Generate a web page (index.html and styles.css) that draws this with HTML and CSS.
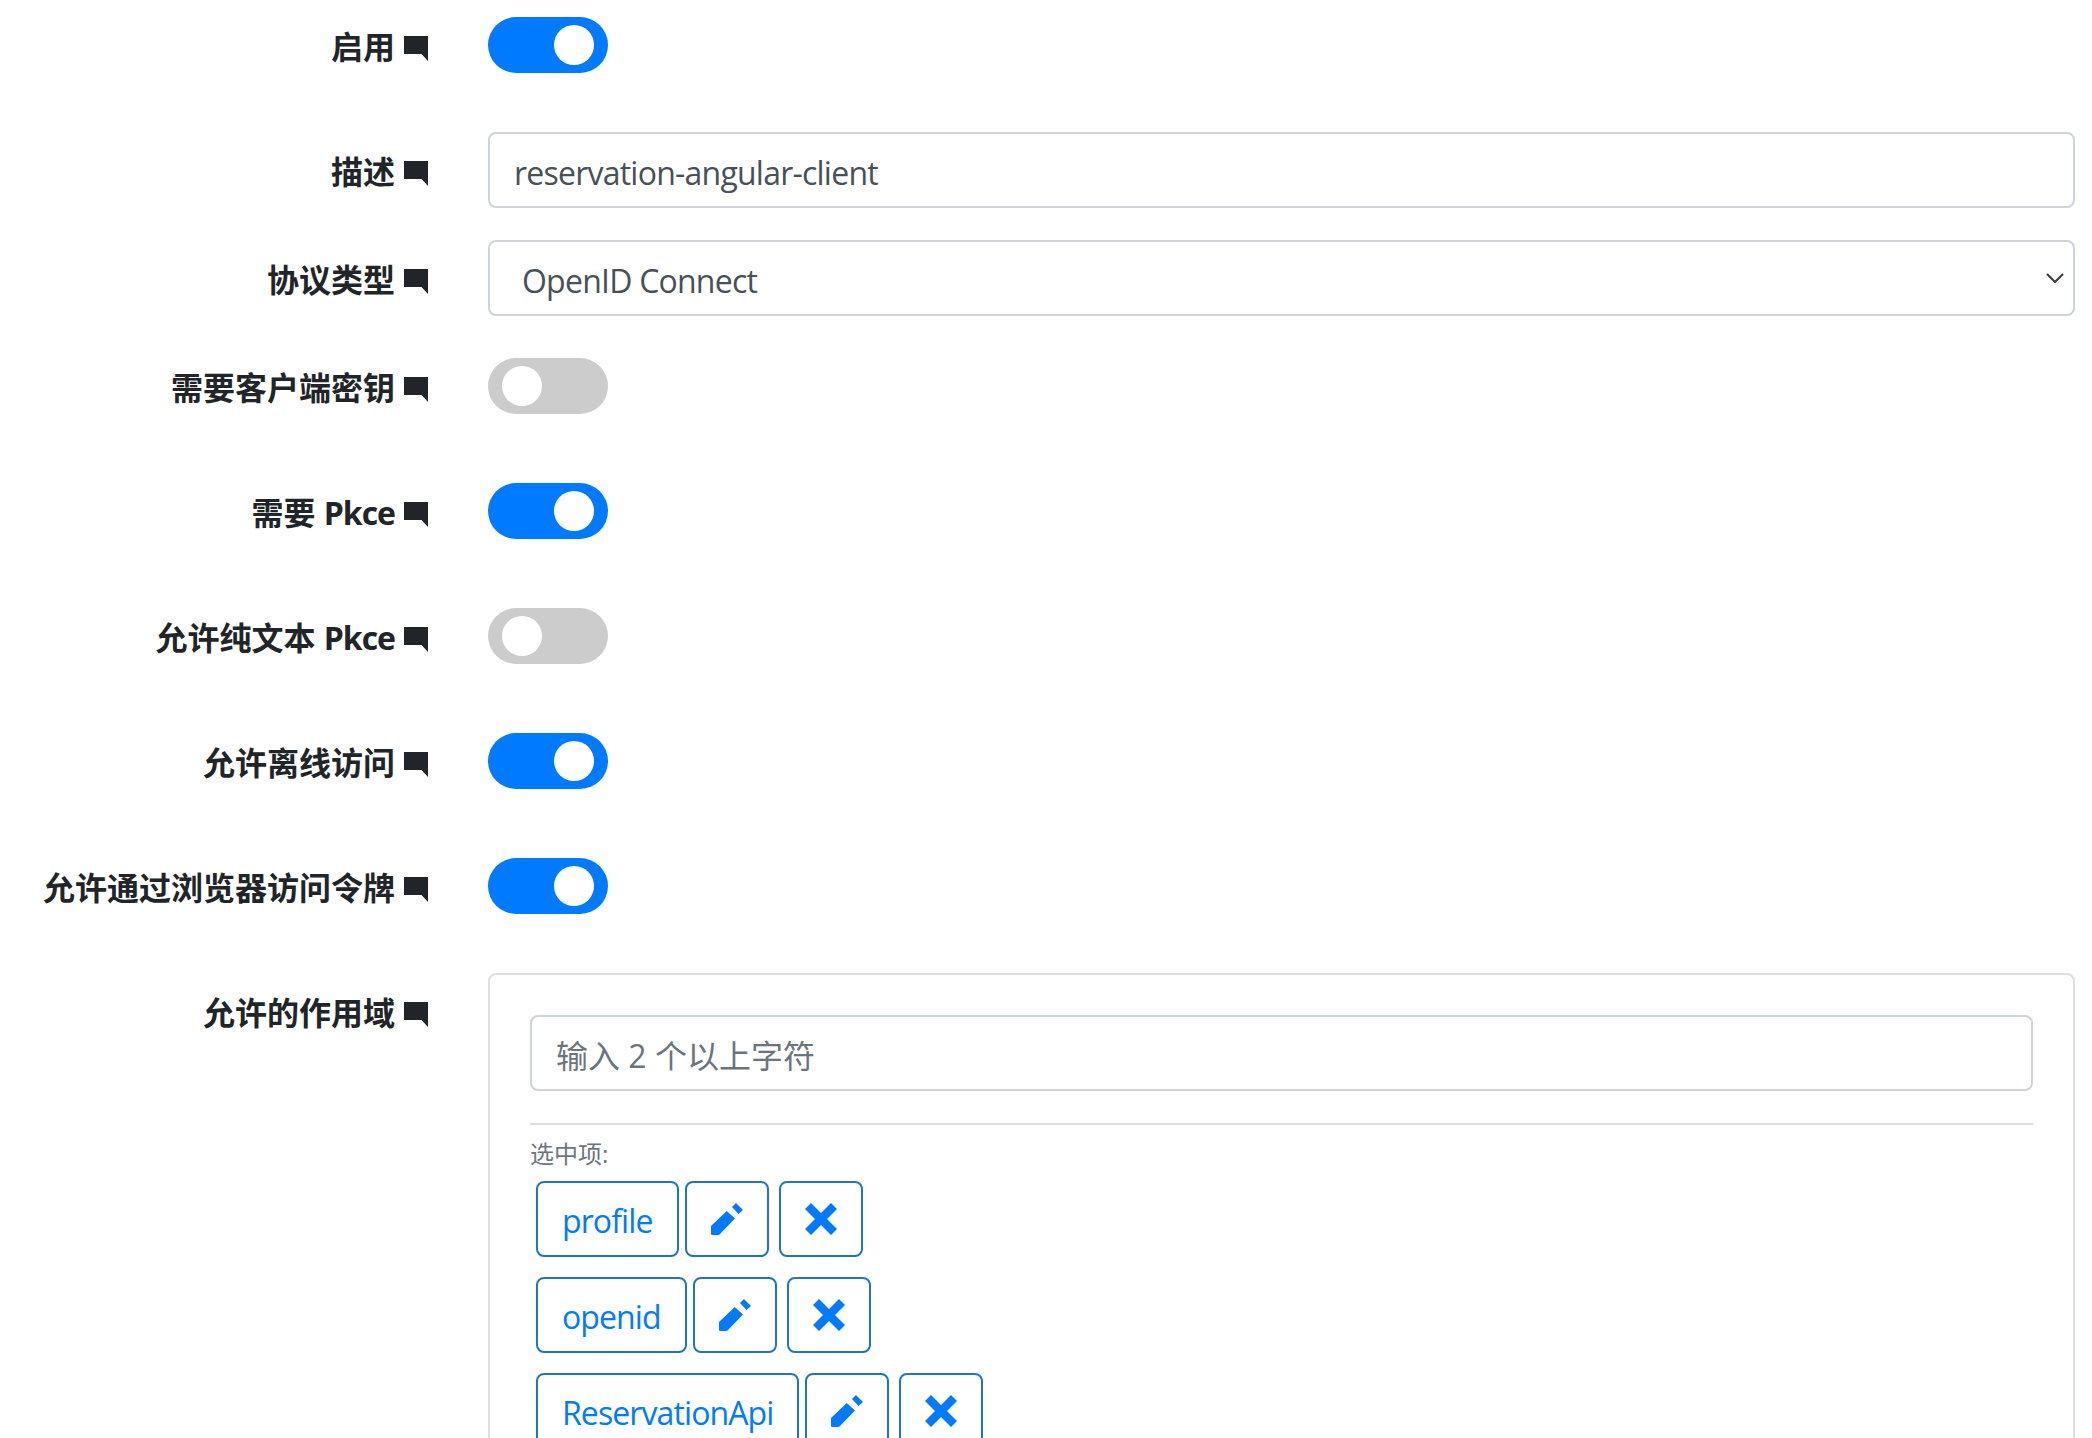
FILE: index.html
```html
<!DOCTYPE html>
<html lang="zh-CN">
<head>
<meta charset="utf-8">
<title>客户端设置</title>
<link rel="stylesheet" href="styles.css">
</head>
<body>
<svg class="defs" width="0" height="0" aria-hidden="true">
  <symbol id="i-comment" viewBox="0 0 24 25"><path d="M0 0H24V25L17.500 18H0Z"/></symbol>
  <symbol id="i-pencil" viewBox="0 0 32 32"><path d="M0 23L15.700 8L24 15.500L8 32H1Q0 32 0 31ZM21 4L25 0L32 7L27.500 11Z"/></symbol>
  <symbol id="i-x" viewBox="0 0 32 32"><path d="M6 0L16 10L26 0L32 6L22 16L32 26L26 32L16 22L6 32L0 26L10 16L0 6Z"/></symbol>
</svg>
<form class="form">
  <div class="row">
    <label class="name">启用<svg class="hint"><use href="#i-comment"/></svg></label>
    <div class="toggle on"></div>
  </div>
  <div class="row">
    <label class="name">描述<svg class="hint"><use href="#i-comment"/></svg></label>
    <input class="field" type="text" value="reservation-angular-client">
  </div>
  <div class="row">
    <label class="name">协议类型<svg class="hint"><use href="#i-comment"/></svg></label>
    <select class="field select"><option>OpenID Connect</option></select>
  </div>
  <div class="row">
    <label class="name">需要客户端密钥<svg class="hint"><use href="#i-comment"/></svg></label>
    <div class="toggle"></div>
  </div>
  <div class="row">
    <label class="name"><span>需要 <span class="latin">Pkce</span></span><svg class="hint"><use href="#i-comment"/></svg></label>
    <div class="toggle on"></div>
  </div>
  <div class="row">
    <label class="name"><span>允许纯文本 <span class="latin">Pkce</span></span><svg class="hint"><use href="#i-comment"/></svg></label>
    <div class="toggle"></div>
  </div>
  <div class="row">
    <label class="name">允许离线访问<svg class="hint"><use href="#i-comment"/></svg></label>
    <div class="toggle on"></div>
  </div>
  <div class="row">
    <label class="name">允许通过浏览器访问令牌<svg class="hint"><use href="#i-comment"/></svg></label>
    <div class="toggle on"></div>
  </div>
  <div class="row">
    <label class="name">允许的作用域<svg class="hint"><use href="#i-comment"/></svg></label>
    <div class="card">
      <input class="field" type="text" placeholder="输入 2 个以上字符">
      <hr class="rule">
      <small class="caption">选中项:</small>
      <div class="chip-row">
        <button type="button" class="btn">profile</button>
        <button type="button" class="btn icon"><svg class="glyph"><use href="#i-pencil"/></svg></button>
        <button type="button" class="btn icon"><svg class="glyph"><use href="#i-x"/></svg></button>
      </div>
      <div class="chip-row">
        <button type="button" class="btn">openid</button>
        <button type="button" class="btn icon"><svg class="glyph"><use href="#i-pencil"/></svg></button>
        <button type="button" class="btn icon"><svg class="glyph"><use href="#i-x"/></svg></button>
      </div>
      <div class="chip-row">
        <button type="button" class="btn">ReservationApi</button>
        <button type="button" class="btn icon"><svg class="glyph"><use href="#i-pencil"/></svg></button>
        <button type="button" class="btn icon"><svg class="glyph"><use href="#i-x"/></svg></button>
      </div>
    </div>
  </div>
</form>
</body>
</html>
```
FILE: styles.css
```css
* { box-sizing: border-box; }
html, body { margin: 0; height: 1438px; overflow: hidden; background: #fff; }
body { font-family: "Open Sans", "Noto Sans CJK SC", sans-serif; font-size: 32px; line-height: 48px; color: #212529; }
.defs { position: absolute; }
.form { display: flex; flex-direction: column; gap: 32px; padding: 7px 0 0; width: 2075px; }
.row { display: grid; grid-template-columns: 428px 1587px; column-gap: 60px; align-items: start; }
.name { display: flex; justify-content: flex-end; align-items: center; gap: 9px; padding-top: 16px; font-weight: 700; white-space: nowrap; }
.latin { letter-spacing: -1px; }
.hint { width: 24px; height: 25px; fill: #212529; flex: none; margin-top: 3px; }
.toggle { width: 120px; height: 56px; margin: 10px 0 27px; border-radius: 28px; background: #ccc; padding: 8px 14px; display: flex; }
.toggle::before { content: ""; width: 40px; height: 40px; border-radius: 50%; background: #fff; }
.toggle.on { background: #007bff; justify-content: flex-end; }
.field { display: block; width: 100%; height: 76px; padding: 14px 24px 10px; border: 2px solid #ced4da; border-radius: 8px; background: #fff; color: #495057; font: 400 32px/48px "Open Sans", "Noto Sans CJK SC", sans-serif; letter-spacing: -0.77px; outline: none; }
.field::placeholder { color: #6c757d; opacity: 1; letter-spacing: 0; }
.select { appearance: none; background: #fff url("data:image/svg+xml,%3Csvg xmlns='http://www.w3.org/2000/svg' viewBox='0 0 18 10'%3E%3Cpath d='M1 1l8 8 8-8' fill='none' stroke='%23343a40' stroke-width='2'/%3E%3C/svg%3E") no-repeat right 9px center / 18px 10px; padding: 15px 24px 9px 32px; }
.card { border: 2px solid #dfdfdf; border-radius: 8px 8px 0 0; padding: 40px 40px 0; min-height: 600px; display: flex; flex-direction: column; align-items: stretch; }
.rule { width: 100%; height: 2px; margin: 32px 0 11px; border: 0; background: #dfdfdf; }
.caption { display: block; font-size: 24px; line-height: 36px; color: #6c757d; margin-bottom: 9px; }
.chip-row { display: flex; margin: 0 0 20px 6px; }
.btn { height: 76px; padding: 14px 24px 10px; margin-right: 6px; border: 2px solid #1f76bd; border-radius: 8px; background: #fff; color: #007bff; font: 400 32px/48px "Open Sans", sans-serif; letter-spacing: -0.9px; display: flex; align-items: center; justify-content: center; }
.btn.icon { width: 84px; padding: 0; margin-right: 10px; }
.glyph { width: 32px; height: 32px; fill: #007bff; }
```
